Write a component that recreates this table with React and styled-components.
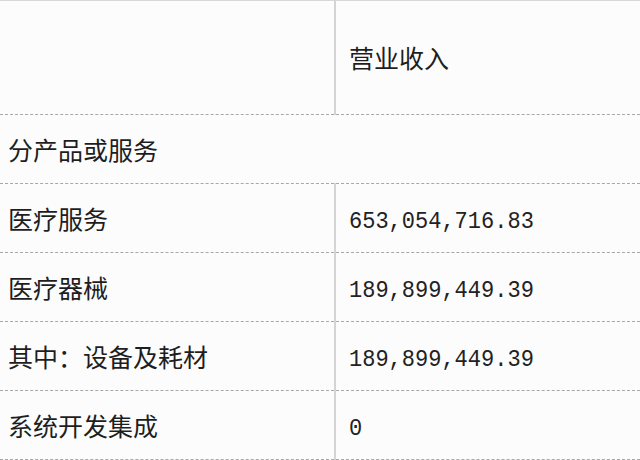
import React from "react";
import styled, { createGlobalStyle } from "styled-components";

const Global = createGlobalStyle`
  html, body { margin: 0; padding: 0; background: #fcfcfd; }
  body { font-family: "Noto Sans CJK SC", "Noto Sans", sans-serif; }
`;

const Table = styled.table`
  width: 640px;
  border-collapse: collapse;
  border-top: 1px solid #d8d8d8;
  table-layout: fixed;
`;

const Row = styled.tr`
  height: ${(p) => p.$h}px;
  border-bottom: 1px dashed #a8a8a8;
`;

const Cell = styled.td`
  padding: 0 0 0 ${(p) => (p.$right ? 13 : 8)}px;
  vertical-align: middle;
  color: #1e1e1e;
  font-size: 25px;
  line-height: 1;
  font-family: "Noto Sans CJK SC", "Noto Sans", sans-serif;
  ${(p) => (p.$right ? "border-left: 2px solid #d4d4d4;" : "")}
`;

const Num = styled.span`
  display: inline-block;
  font-family: "Liberation Mono", "Noto Sans CJK SC", monospace;
  font-size: 22px;
  color: #222;
  transform: scaleY(1.12);
  transform-origin: center;
`;

const rows = [
  ["医疗服务", "653,054,716.83"],
  ["医疗器械", "189,899,449.39"],
  ["其中：设备及耗材", "189,899,449.39"],
  ["系统开发集成", "0"],
];

export default function App() {
  return (
    <>
      <Global />
      <Table>
        <colgroup>
          <col style={{ width: 335 }} />
          <col />
        </colgroup>
        <tbody>
          <Row $h={114}>
            <Cell />
            <Cell $right>营业收入</Cell>
          </Row>
          <Row $h={69}>
            <Cell colSpan={2}>分产品或服务</Cell>
          </Row>
          {rows.map(([a, b]) => (
            <Row key={a} $h={69}>
              <Cell>{a}</Cell>
              <Cell $right>
                <Num>{b}</Num>
              </Cell>
            </Row>
          ))}
        </tbody>
      </Table>
    </>
  );
}
